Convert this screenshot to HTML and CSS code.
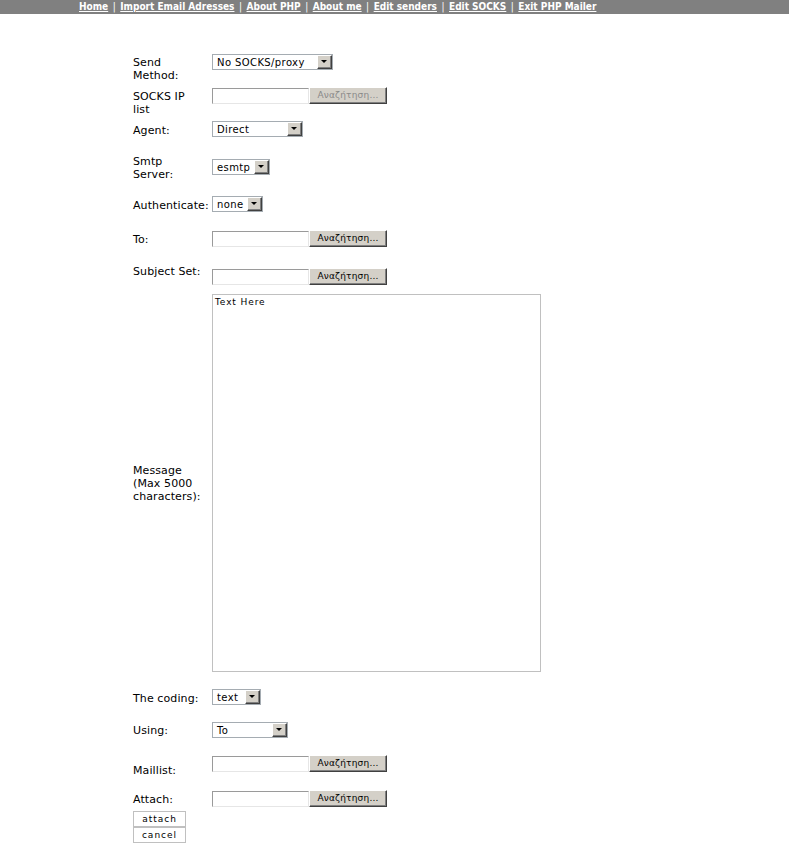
FILE: index.html
```html
<!DOCTYPE html>
<html>
<head>
<meta charset="utf-8">
<title>PHP Mailer</title>
<link rel="stylesheet" href="styles.css">
</head>
<body>
<div class="nav">
  <a href="#">Home</a><span class="sep">|</span><a href="#">Import Email Adresses</a><span class="sep">|</span><a href="#">About PHP</a><span class="sep">|</span><a href="#">About me</a><span class="sep">|</span><a href="#">Edit senders</a><span class="sep">|</span><a href="#">Edit SOCKS</a><span class="sep">|</span><a href="#">Exit PHP Mailer</a>
</div>

<form class="form">
  <div class="row r-send">
    <div class="label">Send<br>Method:</div>
    <span class="select w-send"><span class="val">No SOCKS/proxy</span><span class="arrow"></span></span>
  </div>
  <div class="row r-socks">
    <div class="label">SOCKS IP<br>list</div>
    <span class="file"><span class="field"></span><span class="browse disabled">Αναζήτηση...</span></span>
  </div>
  <div class="row r-agent">
    <div class="label">Agent:</div>
    <span class="select w-agent"><span class="val">Direct</span><span class="arrow"></span></span>
  </div>
  <div class="row r-smtp">
    <div class="label">Smtp<br>Server:</div>
    <span class="select w-smtp"><span class="val">esmtp</span><span class="arrow"></span></span>
  </div>
  <div class="row r-auth">
    <div class="label">Authenticate:</div>
    <span class="select w-auth"><span class="val">none</span><span class="arrow"></span></span>
  </div>
  <div class="row r-to">
    <div class="label">To:</div>
    <span class="file"><span class="field"></span><span class="browse">Αναζήτηση...</span></span>
  </div>
  <div class="row r-subj">
    <div class="label">Subject Set:</div>
    <span class="file"><span class="field"></span><span class="browse">Αναζήτηση...</span></span>
  </div>
  <div class="row r-msg">
    <div class="label">Message<br>(Max 5000<br>characters):</div>
    <div class="textarea">Text Here</div>
  </div>
  <div class="row r-coding">
    <div class="label">The coding:</div>
    <span class="select w-coding"><span class="val">text</span><span class="arrow"></span></span>
  </div>
  <div class="row r-using">
    <div class="label">Using:</div>
    <span class="select w-using"><span class="val">To</span><span class="arrow"></span></span>
  </div>
  <div class="row r-mail">
    <div class="label">Maillist:</div>
    <span class="file"><span class="field"></span><span class="browse">Αναζήτηση...</span></span>
  </div>
  <div class="row r-attach">
    <div class="label">Attach:</div>
    <span class="file"><span class="field"></span><span class="browse">Αναζήτηση...</span></span>
  </div>
  <div class="buttons">
    <span class="btn">attach</span>
    <span class="btn">cancel</span>
  </div>
</form>
</body>
</html>
```

FILE: styles.css
```css
html, body {
  margin: 0;
  padding: 0;
  background: #ffffff;
}
body {
  font-family: "DejaVu Sans", Verdana, sans-serif;
  font-size: 11px;
  color: #000000;
}

/* top navigation */
.nav {
  height: 14px;
  background: #808080;
  padding-left: 79px;
  font-family: "DejaVu Sans Condensed", "DejaVu Sans", sans-serif;
  font-weight: bold;
  font-size: 10px;
  line-height: 13px;
  white-space: nowrap;
}
.nav a {
  color: #ffffff;
  text-decoration: underline;
}
.nav .sep {
  color: #ffffff;
  font-weight: normal;
  margin: 0 4.5px;
}

/* form layout */
.form {
  margin: 40px 0 0 133px;
}
.row {
  display: flex;
  align-items: flex-start;
}
.label {
  width: 79px;
  flex: none;
  line-height: 13px;
  letter-spacing: 0.1px;
}
.r-send   { height: 33px; }
.r-send .label { margin-top: 2px; }
.r-socks  { height: 34px; }
.r-socks .label { margin-top: 3px; }
.r-agent  { height: 38px; }
.r-agent .label { margin-top: 3px; }
.r-smtp   { height: 37px; }
.r-smtp .label { margin-top: -4px; }
.r-auth   { height: 34px; }
.r-auth .label { margin-top: 3px; }
.r-to     { height: 38px; }
.r-to .label { margin-top: 3px; }
.r-subj   { height: 26px; }
.r-subj .label { margin-top: -3px; }
.r-msg    { height: 395px; }
.r-msg .label { margin-top: 170px; }
.r-coding { height: 33px; }
.r-coding .label { margin-top: 3px; }
.r-using  { height: 33px; }
.r-using .label { margin-top: 2px; }
.r-mail   { height: 35px; }
.r-mail .label { margin-top: 9px; }
.r-attach { height: 21px; }
.r-attach .label { margin-top: 3px; }

/* fake select */
.select {
  display: inline-flex;
  align-items: center;
  justify-content: space-between;
  box-sizing: border-box;
  height: 16px;
  border: 1px solid #a5acb2;
  background: #ffffff;
  font-size: 10px;
  letter-spacing: 0.4px;
  padding-left: 4px;
}
.select .val {
  line-height: 12px;
  padding-top: 1px;
}
.w-send   { width: 121px; }
.w-agent  { width: 91px; }
.w-smtp   { width: 58px; }
.w-auth   { width: 51px; }
.w-coding { width: 49px; }
.w-using  { width: 76px; }

.arrow {
  position: relative;
  box-sizing: border-box;
  width: 15px;
  height: 14px;
  background: #d4d0c8;
  border-top: 1px solid #ffffff;
  border-left: 1px solid #ffffff;
  border-right: 1px solid #404040;
  border-bottom: 1px solid #404040;
  box-shadow: inset -1px -1px 0 #808080;
  flex: none;
}
.arrow::after {
  content: "";
  position: absolute;
  left: 3px;
  top: 4px;
  border-left: 3px solid transparent;
  border-right: 3px solid transparent;
  border-top: 3px solid #000000;
}

/* fake file input */
.file {
  display: inline-flex;
  align-items: flex-start;
}
.field {
  box-sizing: border-box;
  width: 97px;
  height: 16px;
  border-top: 1px solid #9a9a9a;
  border-left: 1px solid #9a9a9a;
  border-right: 1px solid #e6e6e6;
  border-bottom: 1px solid #e6e6e6;
  background: #ffffff;
  margin-top: 1px;
}
.browse {
  box-sizing: border-box;
  width: 78px;
  height: 17px;
  background: #d4d0c8;
  border-top: 1px solid #ffffff;
  border-left: 1px solid #ffffff;
  border-right: 1px solid #404040;
  border-bottom: 1px solid #404040;
  box-shadow: inset -1px -1px 0 #808080;
  font-size: 9px;
  line-height: 14px;
  text-align: center;
  color: #000000;
  letter-spacing: 0.2px;
}
.browse.disabled {
  color: #8a8a8a;
}

/* textarea */
.textarea {
  box-sizing: border-box;
  width: 329px;
  height: 378px;
  border: 1px solid #c0c0c0;
  background: #ffffff;
  font-size: 9px;
  letter-spacing: 0.9px;
  padding: 2px 2px 1px;
  line-height: 11px;
}

/* attach / cancel */
.buttons {
  display: flex;
  flex-direction: column;
  width: 53px;
}
.btn {
  box-sizing: border-box;
  height: 16px;
  border: 1px solid #c0c0c0;
  background: #ffffff;
  font-size: 9px;
  line-height: 14px;
  text-align: center;
  letter-spacing: 1px;
}
```
